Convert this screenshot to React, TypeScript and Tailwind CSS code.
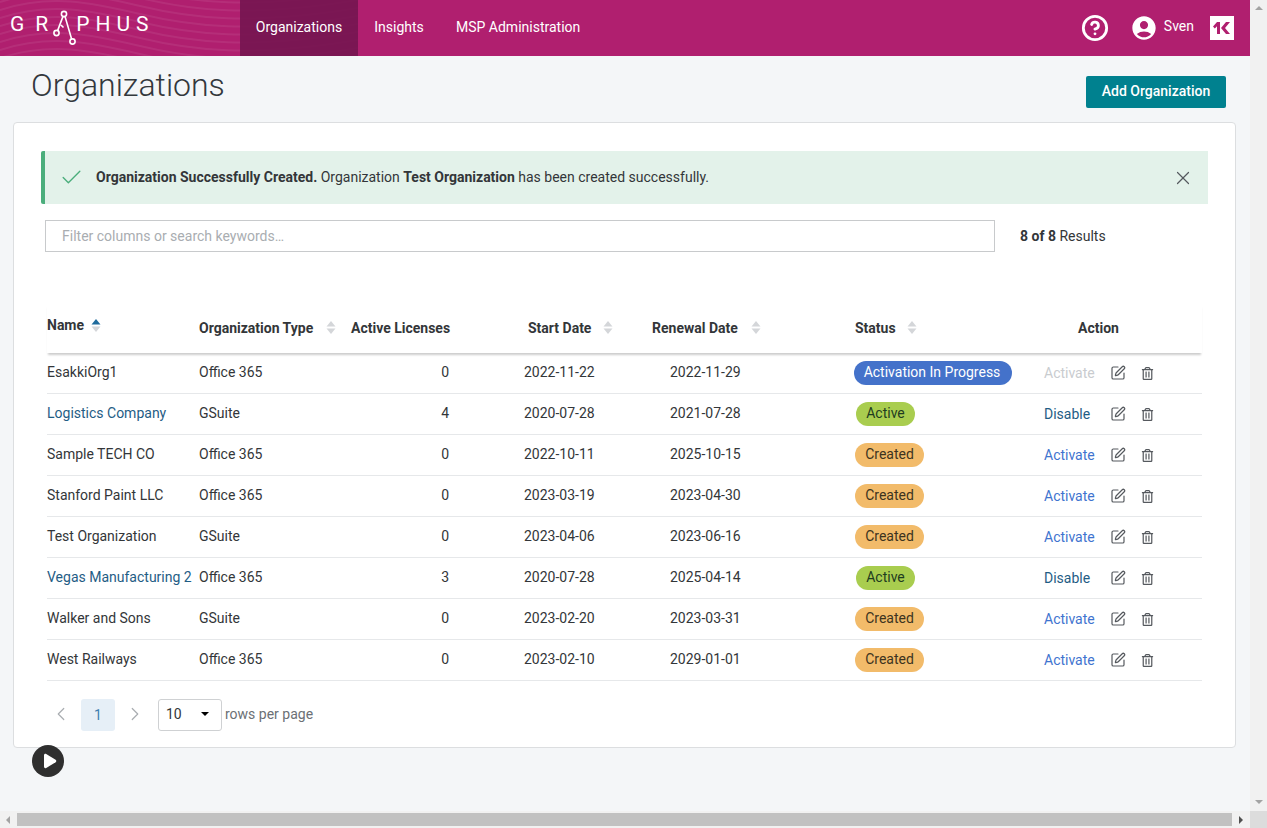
import React from 'react';
import { Check, ChevronLeft, ChevronRight, CircleHelp, SquarePen, X } from 'lucide-react';
import { FaRegTrashAlt } from 'react-icons/fa';
import { MdAccountCircle } from 'react-icons/md';

type Org = {
  name: string;
  link?: boolean;
  type: string;
  licenses: number;
  start: string;
  renewal: string;
  status: 'progress' | 'active' | 'created';
};

const orgs: Org[] = [
  { name: 'EsakkiOrg1', type: 'Office 365', licenses: 0, start: '2022-11-22', renewal: '2022-11-29', status: 'progress' },
  { name: 'Logistics Company', link: true, type: 'GSuite', licenses: 4, start: '2020-07-28', renewal: '2021-07-28', status: 'active' },
  { name: 'Sample TECH CO', type: 'Office 365', licenses: 0, start: '2022-10-11', renewal: '2025-10-15', status: 'created' },
  { name: 'Stanford Paint LLC', type: 'Office 365', licenses: 0, start: '2023-03-19', renewal: '2023-04-30', status: 'created' },
  { name: 'Test Organization', type: 'GSuite', licenses: 0, start: '2023-04-06', renewal: '2023-06-16', status: 'created' },
  { name: 'Vegas Manufacturing 2', link: true, type: 'Office 365', licenses: 3, start: '2020-07-28', renewal: '2025-04-14', status: 'active' },
  { name: 'Walker and Sons', type: 'GSuite', licenses: 0, start: '2023-02-20', renewal: '2023-03-31', status: 'created' },
  { name: 'West Railways', type: 'Office 365', licenses: 0, start: '2023-02-10', renewal: '2029-01-01', status: 'created' },
];

const columns = 'grid grid-cols-[152px_152px_99px_202px_202px_190px_158px] items-center';

function SortIcon({ active = false }: { active?: boolean }) {
  return (
    <svg width="10" height="15" viewBox="0 0 10 15" className="shrink-0">
      <path d="M5 1 9.5 6.5H.5Z" fill={active ? '#1f6b9c' : '#d4d6d9'} />
      <path d="M5 14 .5 8.5h9Z" fill="#d4d6d9" />
    </svg>
  );
}

function Waves() {
  return (
    <svg className="absolute inset-0 h-14 w-[358px]" viewBox="0 0 358 56" fill="none" preserveAspectRatio="none">
      {[-24, -16, -8, 0, 8, 16, 24, 32, 40, 48, 56].map((y) => (
        <path
          key={y}
          d={`M0 ${y + 10}C50 ${y - 6} 90 ${y + 2} 140 ${y + 14}S250 ${y + 34} 358 ${y + 16}`}
          stroke="#ffffff"
          strokeOpacity="0.07"
          strokeWidth="2"
        />
      ))}
    </svg>
  );
}

function Logo() {
  return (
    <div className="relative z-10 flex h-14 w-[240px] items-center pb-[7px] pl-[10px] font-['Roboto',sans-serif] text-[21px] font-normal leading-none text-white">
      <span className="tracking-[11px]">GR</span>
      <svg width="30" height="36" viewBox="0 0 30 36" fill="none" stroke="#ffffff" strokeWidth="1.6" className="-ml-[8px] mt-[9px] shrink-0 self-start">
        <circle cx="13" cy="5" r="2.6" />
        <circle cx="5.5" cy="24" r="2.6" />
        <circle cx="21.5" cy="32.5" r="2.6" />
        <path d="M12 7.4 6.6 21.6M14 7.4 20.6 30M10 16 12.5 18.5" />
      </svg>
      <span className="-ml-[5px] tracking-[6px]">PHUS</span>
    </div>
  );
}

function StatusBadge({ status }: { status: Org['status'] }) {
  if (status === 'progress') {
    return (
      <span className="inline-flex h-6 w-[158px] items-center justify-center rounded-full bg-[#4472ca] pb-[2px] pr-[2px] text-sm text-white">
        Activation In Progress
      </span>
    );
  }
  if (status === 'active') {
    return (
      <span className="ml-[2px] inline-flex h-6 w-[59px] items-center justify-center rounded-full bg-[#a9cd4f] pb-[2px] text-sm text-[#1f3d1f]">
        Active
      </span>
    );
  }
  return (
    <span className="ml-[1px] inline-flex h-6 w-[69px] items-center justify-center rounded-full bg-[#f2bb6a] pb-[2px] text-sm text-[#3d3320]">
      Created
    </span>
  );
}

function ActionLink({ status }: { status: Org['status'] }) {
  if (status === 'progress') return <span className="w-[66px] text-[#c9cccf]">Activate</span>;
  if (status === 'active') return <span className="w-[66px] text-[#1f5d85]">Disable</span>;
  return <span className="w-[66px] text-[#3f74cf]">Activate</span>;
}

export default function App() {
  return (
    <div className="relative flex h-screen w-full overflow-hidden bg-[#f4f6f8] font-['Roboto',sans-serif] text-sm text-[#333639]">
      <div className="flex h-full min-w-0 flex-1 flex-col">
        <div className="flex min-h-0 flex-1 flex-col">
          {/* top nav */}
          <header className="relative flex h-14 shrink-0 items-stretch bg-[#b01f6f] text-white">
            <Waves />
            <Logo />
            <nav className="relative z-10 flex items-stretch">
              <a className="flex w-[118px] items-center justify-center bg-[#741550]/90 pb-[2px]">Organizations</a>
              <a className="flex w-[82px] items-center justify-center pb-[2px]">Insights</a>
              <a className="flex items-center pb-[2px] pl-[16px]">MSP Administration</a>
            </nav>
            <div className="relative z-10 ml-auto flex items-center pr-[16px]">
              <CircleHelp size={28} strokeWidth={2.4} className="mr-[21px]" />
              <MdAccountCircle size={28} className="mr-[6px]" />
              <span className="mb-[4px] mr-[16px]">Sven</span>
              <div className="flex h-6 w-6 items-center justify-center bg-white">
                <svg width="18" height="14" viewBox="0 0 18 14" fill="#b01f6f">
                  <path d="M0 5.5 4 1h3v12H4V5.2L1.8 7.4Z" />
                  <path d="M8 7 13 1h4l-5 6 5 6h-4Z" />
                </svg>
              </div>
            </div>
          </header>

          <main className="flex min-h-0 flex-1 flex-col px-[13px] pr-[14px]">
            <div className="flex h-[66px] shrink-0 items-start justify-between pl-[18px] pr-[10px]">
              <h1 className="mt-[10px] text-[32px] font-light leading-[38px] text-[#33383d]">Organizations</h1>
              <button className="mt-5 h-8 w-[140px] rounded-[2px] bg-[#00818f] pb-[2px] text-sm font-medium text-white">
                Add Organization
              </button>
            </div>

            <section className="h-[626px] shrink-0 rounded-[4px] border border-[#dcdee0] bg-white px-[27px] pt-[28px]">
              {/* success alert */}
              <div className="flex h-[53px] items-center rounded-l-[2px] border-l-[4px] border-[#4bae7c] bg-[#e3f2ea] pl-[14px] pr-[14px]">
                <Check size={25} strokeWidth={1.3} className="text-[#4bae7c]" />
                <p className="ml-[12px] flex-1 pb-[2px]">
                  <b className="font-bold">Organization Successfully Created.</b> Organization{' '}
                  <b className="font-bold">Test Organization</b> has been created successfully.
                </p>
                <X size={22} strokeWidth={1.3} className="text-[#555a5f]" />
              </div>

              {/* filter row */}
              <div className="mt-4 flex items-center pl-[4px]">
                <div className="flex h-8 w-[950px] items-center border border-[#c8cacc] bg-white pl-4 text-[#a9adb1]">
                  Filter columns or search keywords…
                </div>
                <span className="ml-[25px]">
                  <b className="font-bold">8 of 8</b> Results
                </span>
              </div>

              {/* table */}
              <div className="ml-[6px] mt-[52px] w-[1155px]">
                <div className={`${columns} h-[49px] pb-[2px] font-bold shadow-[0_3px_2px_-1px_rgba(0,0,0,0.2)]`}>
                  <div className="mb-[5px] flex items-center gap-[7px]">
                    Name <SortIcon active />
                  </div>
                  <div className="flex items-center gap-[13px]">
                    Organization Type <SortIcon />
                  </div>
                  <div className="whitespace-nowrap">Active Licenses</div>
                  <div className="flex items-center gap-[12px] pl-[78px]">
                    Start Date <SortIcon />
                  </div>
                  <div className="flex items-center gap-[13px]">
                    Renewal Date <SortIcon />
                  </div>
                  <div className="flex items-center gap-[11px] pl-[1px]">
                    Status <SortIcon />
                  </div>
                  <div className="pl-[34px]">Action</div>
                </div>

                {orgs.map((org) => (
                  <div key={org.name} className={`${columns} h-[41px] border-b border-[#e6e8ea]`}>
                    <div className={org.link ? 'whitespace-nowrap pb-[2px] text-[#1f5d85]' : 'whitespace-nowrap pb-[2px]'}>{org.name}</div>
                    <div className="pb-[2px]">{org.type}</div>
                    <div className="pb-[2px] pr-[1px] text-right">{org.licenses}</div>
                    <div className="pb-[2px] pl-[74px]">{org.start}</div>
                    <div className="pb-[2px] pl-[18px]">{org.renewal}</div>
                    <div>
                      <StatusBadge status={org.status} />
                    </div>
                    <div className="flex items-center">
                      <ActionLink status={org.status} />
                      <SquarePen size={16} strokeWidth={1.8} className="text-[#55595e]" />
                      <FaRegTrashAlt size={13} className="ml-[15px] text-[#55595e]" />
                    </div>
                  </div>
                ))}
              </div>

              {/* pagination */}
              <div className="ml-[6px] mt-[18px] flex items-center text-[#6b7075]">
                <ChevronLeft size={22} strokeWidth={1.3} className="mb-[3px] ml-[3px] text-[#a9adb1]" />
                <span className="ml-[9px] flex h-8 w-[34px] items-center justify-center rounded-[3px] bg-[#e6eff7] text-[#3f7fb0]">
                  1
                </span>
                <ChevronRight size={22} strokeWidth={1.3} className="mb-[3px] ml-[9px] text-[#a9adb1]" />
                <div className="ml-[12px] flex h-8 w-16 items-center justify-between rounded-[3px] border border-[#cfd1d3] bg-white pb-[2px] pl-2 pr-[12px] text-[#333639]">
                  <span className="-ml-[1px]">10</span>
                  <span className="h-0 w-0 border-x-[4px] border-t-[4px] border-x-transparent border-t-black" />
                </div>
                <span className="ml-[3px] pb-[2px]">rows per page</span>
              </div>
            </section>
          </main>
        </div>

        {/* horizontal scrollbar */}
        <div className="flex h-[17px] shrink-0 items-center bg-[#f1f1f1]">
          <span className="ml-[6px] h-0 w-0 border-y-[4px] border-r-[4px] border-y-transparent border-r-[#a3a3a3]" />
          <div className="ml-[7px] h-[13px] w-[1215px] bg-[#c1c1c1]" />
          <span className="ml-[7px] h-0 w-0 border-y-[4px] border-l-[4px] border-y-transparent border-l-[#505050]" />
        </div>
      </div>

      {/* vertical scrollbar */}
      <div className="flex h-full w-[17px] shrink-0 flex-col bg-[#f1f1f1]">
        <span className="mx-auto mt-[6px] h-0 w-0 border-x-[4px] border-b-[4px] border-x-transparent border-b-[#a3a3a3]" />
        <span className="mx-auto mb-[7px] mt-auto h-0 w-0 border-x-[4px] border-t-[4px] border-x-transparent border-t-[#a3a3a3]" />
        <div className="h-[17px] bg-[#dcdcdc]" />
      </div>

      {/* floating play button */}
      <button className="absolute left-[32px] top-[745px] flex h-8 w-8 items-center justify-center rounded-full bg-[#2f2f2f] pl-[3px]">
        <svg width="14" height="16" viewBox="0 0 14 16" fill="#ffffff">
          <path d="M1 2.2C1 1 2.2.4 3.2 1l9.4 5.8c.9.6.9 1.8 0 2.4L3.2 15C2.2 15.6 1 15 1 13.8Z" />
        </svg>
      </button>
    </div>
  );
}
